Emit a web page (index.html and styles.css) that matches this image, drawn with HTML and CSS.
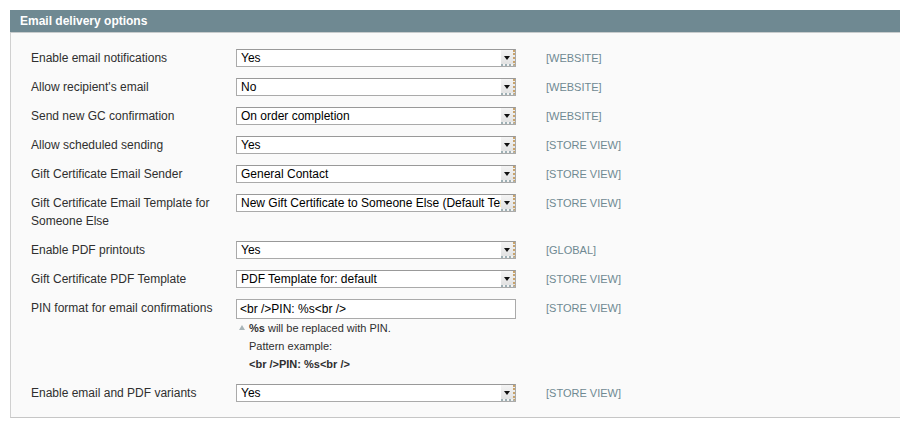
FILE: index.html
```html
<!DOCTYPE html>
<html>
<head>
<meta charset="utf-8">
<link rel="stylesheet" href="styles.css">
</head>
<body>
<div class="section">
  <div class="head">Email delivery options</div>
  <div class="body">
    <div class="row">
      <div class="label">Enable email notifications</div>
      <div class="value"><div class="select"><span class="sel-text">Yes</span><span class="arrow"></span></div></div>
      <div class="scope">[WEBSITE]</div>
    </div>
    <div class="row">
      <div class="label">Allow recipient's email</div>
      <div class="value"><div class="select"><span class="sel-text">No</span><span class="arrow"></span></div></div>
      <div class="scope">[WEBSITE]</div>
    </div>
    <div class="row">
      <div class="label">Send new GC confirmation</div>
      <div class="value"><div class="select"><span class="sel-text">On order completion</span><span class="arrow"></span></div></div>
      <div class="scope">[WEBSITE]</div>
    </div>
    <div class="row">
      <div class="label">Allow scheduled sending</div>
      <div class="value"><div class="select"><span class="sel-text">Yes</span><span class="arrow"></span></div></div>
      <div class="scope">[STORE VIEW]</div>
    </div>
    <div class="row">
      <div class="label">Gift Certificate Email Sender</div>
      <div class="value"><div class="select"><span class="sel-text">General Contact</span><span class="arrow"></span></div></div>
      <div class="scope">[STORE VIEW]</div>
    </div>
    <div class="row">
      <div class="label">Gift Certificate Email Template for Someone Else</div>
      <div class="value"><div class="select"><span class="sel-text">New Gift Certificate to Someone Else (Default Template)</span><span class="arrow"></span></div></div>
      <div class="scope">[STORE VIEW]</div>
    </div>
    <div class="row">
      <div class="label">Enable PDF printouts</div>
      <div class="value"><div class="select"><span class="sel-text">Yes</span><span class="arrow"></span></div></div>
      <div class="scope">[GLOBAL]</div>
    </div>
    <div class="row">
      <div class="label">Gift Certificate PDF Template</div>
      <div class="value"><div class="select"><span class="sel-text">PDF Template for: default</span><span class="arrow"></span></div></div>
      <div class="scope">[STORE VIEW]</div>
    </div>
    <div class="row">
      <div class="label">PIN format for email confirmations</div>
      <div class="value">
        <div class="input">&lt;br /&gt;PIN: %s&lt;br /&gt;</div>
        <div class="note"><span class="tri"></span><b>%s</b> will be replaced with PIN.</div>
        <div class="note">Pattern example:</div>
        <div class="note"><b>&lt;br /&gt;PIN: %s&lt;br /&gt;</b></div>
      </div>
      <div class="scope">[STORE VIEW]</div>
    </div>
    <div class="row">
      <div class="label">Enable email and PDF variants</div>
      <div class="value"><div class="select"><span class="sel-text">Yes</span><span class="arrow"></span></div></div>
      <div class="scope">[STORE VIEW]</div>
    </div>
  </div>
</div>
</body>
</html>
```
FILE: styles.css
```css
html, body {
  margin: 0;
  padding: 0;
  background: #fff;
  overflow: hidden;
}
body {
  padding: 10px 0 0 10px;
  font-family: "Liberation Sans", Arial, sans-serif;
  font-size: 12px;
  color: #2f2f2f;
}
.section {
  width: 900px;
}
.head {
  background: #6f8992;
  color: #fff;
  font-weight: bold;
  font-size: 12px;
  height: 22px;
  line-height: 22px;
  padding-left: 10px;
  border-bottom: 1px solid #c8cccd;
}
.body {
  background: #fafafa;
  border-left: 1px solid #d0d0d0;
  border-bottom: 1px solid #c6c6c6;
  padding: 10px 0 10px 20px;
}
.row {
  display: grid;
  grid-template-columns: 205px 280px auto;
  padding: 5.5px 0;
  align-items: start;
}
.label {
  line-height: 18px;
  color: #2f2f2f;
  padding-right: 8px;
}
.select {
  position: relative;
  height: 18px;
  box-sizing: border-box;
  border: 1px solid #aaa;
  border-top-color: #999;
  background: #fff;
  display: flex;
  align-items: center;
  overflow: hidden;
}
.sel-text {
  flex: 1;
  padding-left: 4px;
  color: #000;
  white-space: nowrap;
  overflow: hidden;
  line-height: 16px;
}
.arrow {
  width: 14px;
  height: 16px;
  box-sizing: border-box;
  background: linear-gradient(#f4f4f4, #e2e2e2);
  border-right: 2px dotted #c9a36a;
  border-bottom: 2px dotted #9eb0b5;
  position: relative;
  flex: none;
}
.arrow::after {
  content: "";
  position: absolute;
  left: 3px;
  top: 6px;
  border-left: 3px solid transparent;
  border-right: 3px solid transparent;
  border-top: 4px solid #111;
}
.input {
  height: 20px;
  box-sizing: border-box;
  border: 1px solid #aaa;
  background: #fff;
  color: #000;
  padding-left: 3px;
  line-height: 18px;
}
.note {
  font-size: 11px;
  line-height: 18px;
  color: #2f2f2f;
  padding-left: 13px;
  position: relative;
}
.tri {
  position: absolute;
  left: 3px;
  top: 6px;
  border-left: 3px solid transparent;
  border-right: 3px solid transparent;
  border-bottom: 5px solid #a8b4b8;
}
.scope {
  font-size: 11px;
  line-height: 18px;
  color: #6f8992;
  padding-left: 30px;
}
```
